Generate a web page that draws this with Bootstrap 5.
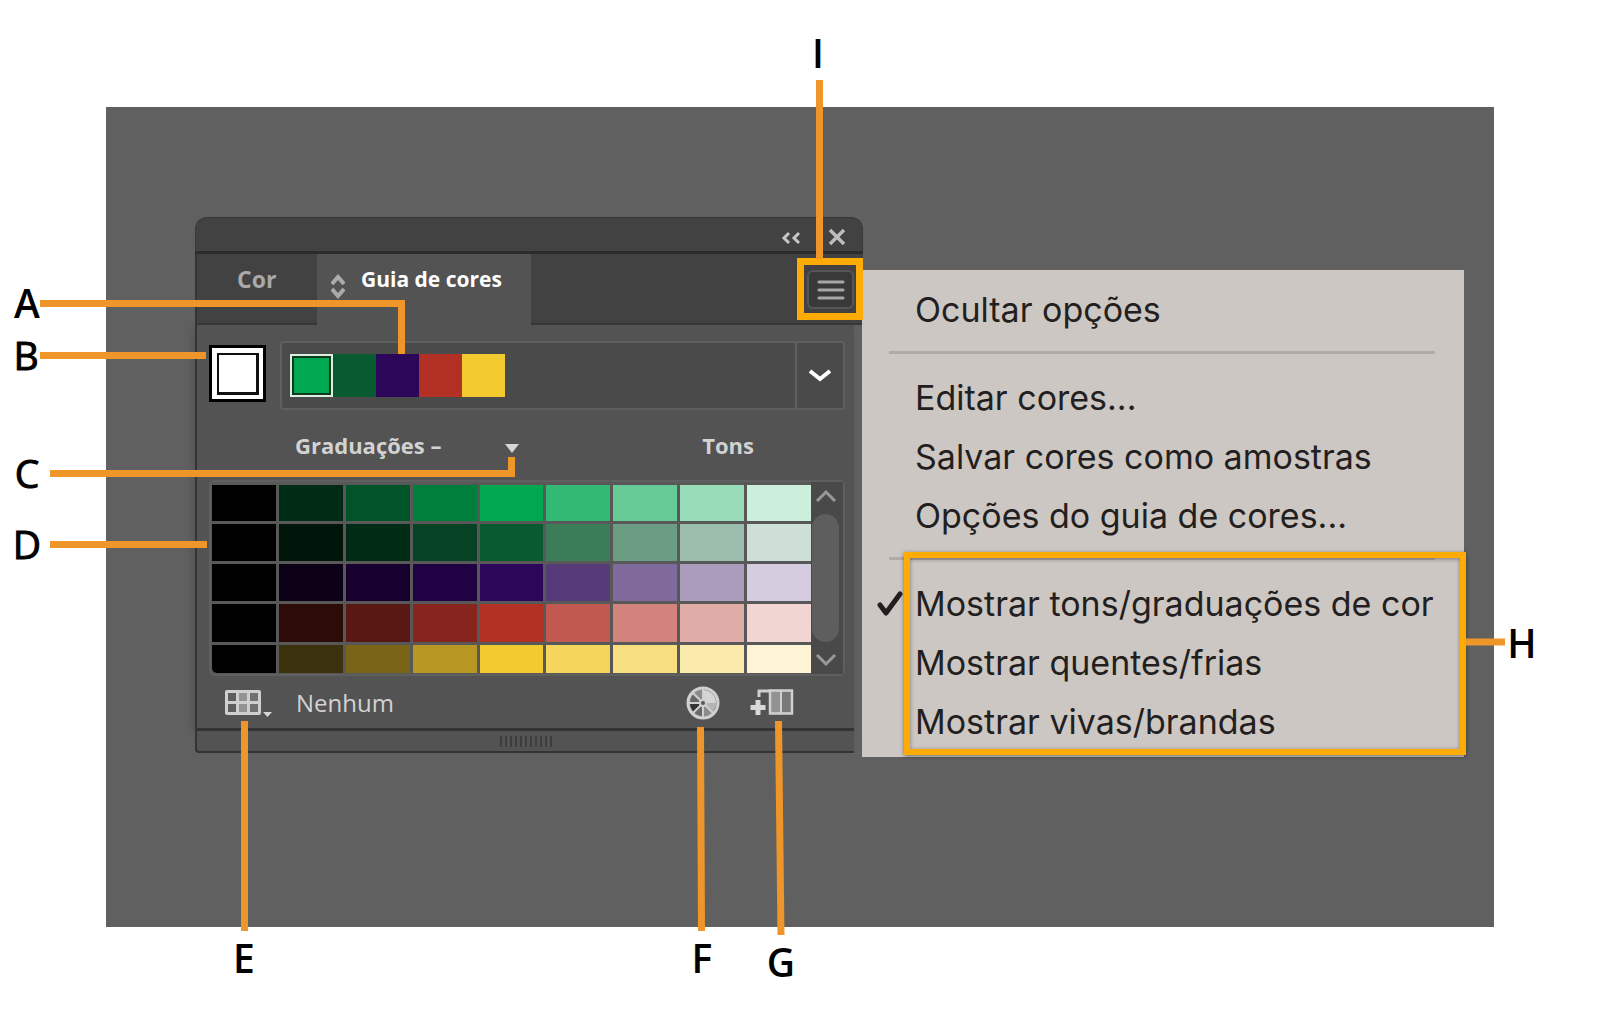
<!DOCTYPE html>
<html lang="pt-BR">
<head>
<meta charset="utf-8">
<meta name="viewport" content="width=device-width, initial-scale=1">
<title>Painel Guia de cores</title>
<link rel="stylesheet" href="https://cdn.jsdelivr.net/npm/bootstrap@5.3.0/dist/css/bootstrap.min.css">
<style>
  body { background: #fff; font-family: "Open Sans", "Noto Sans", sans-serif; }
  button { font: inherit; color: inherit; background: none; border: 0; padding: 0; }
  svg { display: block; }
  .stage { padding: 107px 106px 106px; }
  .canvas { background: #606060; padding: 110px 30px 170px 89px; }

  .guide { width: 668px; flex: none; color: #d2d2d2; margin-right: -1px; }
  .titlebar { height: 37px; background: #424242; border: 1px solid #383838; border-bottom: 3px solid #2c2c2c; border-radius: 12px 12px 0 0; padding: 6px 16px 0 0; gap: 27px; }
  .tabs { height: 71px; background: #424242; border-left: 2px solid #343434; font-size: 22px; line-height: 50px; font-weight: 700; }
  .tab-idle { width: 120px; padding-left: 40px; border-bottom: 2px solid #383838; color: #a9a9a9; font-size: 23px; }
  .tab-open { width: 214px; padding-left: 14px; gap: 16px; background: #535353; color: #fff; font-size: 21px; }
  .tab-open svg { margin-top: 20px; }
  .tab-rest { border-bottom: 2px solid #383838; }
  .menu-btn { width: 47px; height: 39px; margin: 16px 9px 0 0; border: 2px solid #565656; border-radius: 6px; background: #393939; }
  .guide-body { margin-right: 9px; background: #535353; border-left: 2px solid #343434; padding: 16px 9px 0 12px; box-shadow: -3px 4px 8px rgba(0,0,0,.12); }
  .base-color { width: 57px; height: 57px; margin: 4px 14px 0 0; border: 3px solid #000; background: #fff; padding: 5px; }
  .base-color span { display: block; width: 42px; height: 42px; border: solid #111; border-width: 2px 3px 3px 2px; }
  .harmony { height: 69px; border: 2px solid #5f5f5f; border-radius: 4px; background: #4a4a4a; }
  .harmony-colors { padding: 11px 0 0 8px; }
  .chip { width: 43px; height: 43px; }
  .chip-on { border: 2px solid #dceee0; outline: 2px solid #0b3a1c; outline-offset: -4px; }
  .drop { width: 48px; border-left: 2px solid #5f5f5f; }
  .heads { height: 70px; font-size: 22px; font-weight: 700; padding: 0 91px 0 86px; }
  .heads button { gap: 64px; }
  .heads svg { margin-top: 6px; }
  .grid-box { border: 2px solid #5f5f5f; border-radius: 5px; background: #585858; padding: 3px 0 1px 1px; height: 196px; }
  .shades { display: grid; grid-template-columns: repeat(9, 1fr); grid-template-rows: 36px 37px 37px 38px 29px; gap: 3px; border-bottom-left-radius: 5px; overflow: hidden; }
  .scroller { width: 32px; margin: -3px 0 -1px; background: #494949; padding-right: 3px; }
  .thumb { width: 27px; background: #5e5e5e; border-radius: 14px; }
  .tools { height: 52px; padding: 2px 51px 0 16px; font-size: 24px; font-weight: 500; }
  .grip { height: 25px; margin-right: 9px; background: #535353; border: solid #343434; border-width: 3px 0 2px 2px; border-bottom-left-radius: 4px; gap: 3px; }
  .grip i { width: 2px; height: 11px; background: #3d3d3d; }

  .flyout { margin-top: 53px; background: #cdc7c3; padding: 10px 0 6px; color: #231f20; font-family: Inter, sans-serif; font-size: 34px; line-height: 59px; }
  .flyout button { display: block; width: 100%; text-align: left; padding-left: 53px; white-space: nowrap; }
  .rule { height: 3px; margin: 12px 29px 14px 27px; background: #b1aba8; }
  .checkmark { position: absolute; left: 14px; top: 16px; }
  .mark-group { position: absolute; inset: -22px -2px -4px 42px; border: 6px solid #ffab05; box-shadow: 0 1px 4px rgba(0,0,0,.45), inset 0 1px 4px rgba(0,0,0,.4); pointer-events: none; }
  .mark-h { position: absolute; left: 100%; top: 64px; pointer-events: none; overflow: visible; }
  .callouts { position: absolute; left: 0; top: 0; overflow: visible; pointer-events: none; }
  .callout-line { fill: none; stroke: #ee962a; stroke-width: 7; }
  .callout-text { font: 600 39px "Open Sans", sans-serif; text-anchor: middle; fill: #000; }
  .callout-thin { font-weight: 400; stroke: #000; stroke-width: 1; }
</style>
<script src="https://cdn.jsdelivr.net/npm/bootstrap@5.3.0/dist/js/bootstrap.bundle.min.js"></script>
</head>
<body>
<main class="stage position-relative">
  <div class="canvas d-flex align-items-start">

    <section class="guide" aria-label="Guia de cores">
      <div class="titlebar d-flex justify-content-end align-items-start">
        <button aria-label="Recolher"><svg width="20" height="27" viewBox="0 0 20 27" fill="none" stroke="#c6c6c6" stroke-width="3"><path d="M8 9L3 14l5 5M18 9l-5 5 5 5"/></svg></button>
        <button aria-label="Fechar"><svg width="18" height="27" viewBox="0 0 18 27" fill="none" stroke="#bdbdbd" stroke-width="3.5"><path d="M2 6l14 14M16 6L2 20"/></svg></button>
      </div>
      <div class="tabs d-flex">
        <button class="tab-idle d-flex align-items-start">Cor</button>
        <button class="tab-open d-flex align-items-start"><svg width="14" height="25" viewBox="0 0 14 25" fill="none" stroke="#ababab" stroke-width="4"><path d="M1 10l6-7 6 7M1 15l6 7 6-7"/></svg>Guia de cores</button>
        <div class="tab-rest flex-grow-1 d-flex justify-content-end">
          <button class="menu-btn d-flex align-items-center justify-content-center" aria-label="Menu do painel"><svg width="28" height="20" viewBox="0 0 28 20" stroke="#a8a8a8" stroke-width="3" stroke-linecap="round"><path d="M2 2h24M2 10h24M2 18h24"/></svg></button>
        </div>
      </div>

      <div class="guide-body">
        <div class="d-flex align-items-start">
          <button class="base-color" aria-label="Cor base"><span></span></button>
          <div class="harmony d-flex flex-grow-1">
            <div class="harmony-colors d-flex flex-grow-1">
              <div class="chip chip-on" style="background:#00a851"></div>
              <div class="chip" style="background:#085a30"></div>
              <div class="chip" style="background:#2c0659"></div>
              <div class="chip" style="background:#b23024"></div>
              <div class="chip" style="background:#f4ca31"></div>
            </div>
            <button class="drop d-flex align-items-center justify-content-center" aria-label="Regras de harmonia"><svg width="24" height="16" viewBox="0 0 24 16" fill="none" stroke="#fff" stroke-width="4"><path d="M2 3l10 8 10-8"/></svg></button>
          </div>
        </div>
        <div class="heads d-flex justify-content-between align-items-center">
          <button class="d-flex align-items-center"><span>Graduações –</span><svg width="14" height="10" viewBox="0 0 14 10"><path d="M0 1h14L7 10z" fill="#d6d6d6"/></svg></button>
          <span>Tons</span>
        </div>
        <div class="grid-box d-flex">
          <div class="shades flex-grow-1" id="shades"></div>
          <div class="scroller d-flex flex-column align-items-center">
            <svg width="24" height="32" viewBox="0 0 24 32" fill="none" stroke="#999" stroke-width="3"><path d="M3 19l9-9 9 9"/></svg>
            <div class="thumb flex-grow-1"></div>
            <svg width="24" height="32" viewBox="0 0 24 32" fill="none" stroke="#999" stroke-width="3"><path d="M3 13l9 9 9-9"/></svg>
          </div>
        </div>
        <div class="tools d-flex align-items-center">
          <button aria-label="Limitar a biblioteca"><svg width="47" height="28" viewBox="0 0 47 28"><rect x="0" y="1" width="36" height="25" rx="2" fill="#cfcfcf"/><g fill="#5d5d5d"><path d="M3 4h8v8H3zM3 15h8v8H3z"/><path d="M14 4h8v8h-8zM14 15h8v8h-8z" fill="#939393"/><path d="M25 4h8v8h-8zM25 15h8v8h-8z" fill="#707070"/></g><path d="M38 23h9l-4.500 5z" fill="#d6d6d6"/></svg></button>
          <span class="ms-4 flex-grow-1">Nenhum</span>
          <button class="me-4" aria-label="Editar cores"><svg width="40" height="34" viewBox="0 0 40 34"><circle cx="17" cy="17" r="15" fill="#8a8a8a" stroke="#d0d0d0" stroke-width="3"/><path d="M17 17V4a13 13 0 0 1 13 13z" fill="#d4d4d4"/><path d="M17 17h13a13 13 0 0 1-4 9z" fill="#b4b4b4"/><path d="M17 17l9 9a13 13 0 0 1-9 4z" fill="#8c8c8c"/><path d="M17 17L8 26a13 13 0 0 0 9 4z" fill="#686868"/><path d="M17 17L8 26a13 13 0 0 1-4-9z" fill="#333"/><path d="M17 17H4a13 13 0 0 1 4-9z" fill="#666"/><path d="M17 17v14M3 17h14M7 7l20 20M17 17L7 27M17 3v14" stroke="#cfcfcf" stroke-width="2"/><circle cx="17" cy="17" r="4" fill="#cfcfcf"/><circle cx="17" cy="17" r="2" fill="#555"/></svg></button>
          <button aria-label="Salvar grupo de cores"><svg width="44" height="30" viewBox="0 0 44 30"><path d="M9 9V3h12" fill="none" stroke="#d0d0d0" stroke-width="3"/><path d="M20 2.500h22v23H20z" fill="#929292" stroke="#d0d0d0" stroke-width="2.500"/><path d="M32 4h8.500v20H32z" fill="#787878"/><path d="M31 3v22" stroke="#d0d0d0" stroke-width="2"/><path d="M5.500 12h5v5h5v5h-5v5h-5v-5h-5v-5h5z" fill="#d8d8d8"/></svg></button>
        </div>
      </div>
      <div class="grip d-flex align-items-center justify-content-center"><i></i><i></i><i></i><i></i><i></i><i></i><i></i><i></i><i></i><i></i><i></i></div>
    </section>

    <nav class="flyout flex-grow-1" aria-label="Opções do painel">
      <button>Ocultar opções</button>
      <div class="rule"></div>
      <button>Editar cores...</button>
      <button>Salvar cores como amostras</button>
      <button>Opções do guia de cores...</button>
      <div class="rule"></div>
      <div class="position-relative">
        <svg class="checkmark" width="28" height="28" viewBox="0 0 28 28" fill="none" stroke="#231f20" stroke-width="5" stroke-linecap="round" stroke-linejoin="round"><path d="M4 15l6 8L24 4"/></svg>
        <button>Mostrar tons/graduações de cor</button>
        <button>Mostrar quentes/frias</button>
        <button>Mostrar vivas/brandas</button>
        <div class="mark-group"></div>
        <svg class="mark-h" width="76" height="20"><path class="callout-line" d="M2 4h39"/><text class="callout-text" x="58" y="20">H</text></svg>
      </div>
    </nav>
  </div>

  <svg class="callouts" width="870" height="1000" viewBox="0 0 870 1000">
    <path d="M800.500 261.500h59v55h-59z" fill="none" stroke="#ffab05" stroke-width="7"/>
    <g class="callout-line">
      <path d="M40 303.500H401.500V354"/>
      <path d="M40 355.500H206"/>
      <path d="M50 473.500H511.500V457"/>
      <path d="M50 544.500H207"/>
      <path d="M244.500 721V931"/>
      <path d="M700.500 727L701.500 931"/>
      <path d="M778.500 721L781 935"/>
      <path d="M819.500 80V259"/>
    </g>
    <g class="callout-text">
      <text x="27" y="318">A</text>
      <text class="callout-thin" x="26" y="370">B</text>
      <text class="callout-thin" x="27" y="488">C</text>
      <text class="callout-thin" x="27" y="559">D</text>
      <text x="244" y="973">E</text>
      <text x="702" y="973">F</text>
      <text x="781" y="977">G</text>
      <text x="818" y="68">I</text>
    </g>
  </svg>
</main>
<script>
  const ramps = [
    ["#000000","#002b14","#005428","#007f3c","#00a851","#33b974","#66cb97","#99dcb9","#cceedc"],
    ["#000000","#00160a","#002c15","#054324","#085a30","#3b7d58","#6b9d83","#9cbdac","#cedfd6"],
    ["#000000","#0c0016","#16002d","#220044","#2c0659","#563a7a","#80699b","#ab9bbd","#d5cddf"],
    ["#000000","#2c0b09","#591813","#86241d","#b23024","#c25950","#d1837c","#e0aca7","#f0d5d3"],
    ["#000000","#3c310d","#796418","#b69724","#f4ca31","#f5d55b","#f7df82","#faeaab","#fdf4d6"]
  ];
  const shades = document.getElementById("shades");
  ramps.flat().forEach(color => {
    const swatch = document.createElement("button");
    swatch.style.background = color;
    swatch.setAttribute("aria-label", color);
    shades.append(swatch);
  });
</script>
</body>
</html>
